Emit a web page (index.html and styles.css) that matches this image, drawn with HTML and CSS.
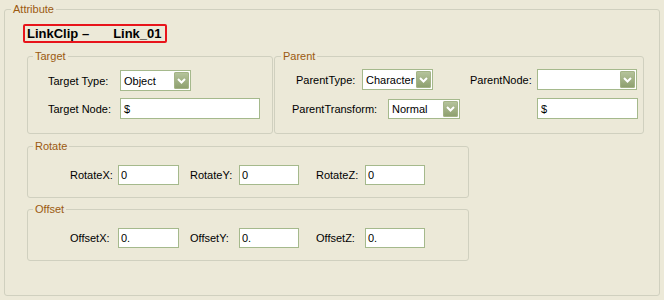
FILE: index.html
```html
<!DOCTYPE HTML>
<html>
    <head>
        <meta http-equiv="Content-Type" content="text/html; charset=UTF-8" />
        <title>Attribute</title>
        <link rel="stylesheet" href="styles.css">
    </head>
    <body>
        <fieldset class="group outer">
            <legend>Attribute</legend>
            <div class="title"><span>LinkClip –</span><span class="clip-name">Link_01</span></div>

            <div class="top-row">
                <fieldset class="group target">
                    <legend>Target</legend>
                    <div class="target-grid">
                        <label>Target Type:</label>
                        <div class="select w71"><span>Object</span><i class="drop"><svg width="9" height="6" viewBox="0 0 9 6"><path d="M1 1 L4.5 4.5 L8 1" fill="none" stroke="#fff" stroke-width="2"/></svg></i></div>
                        <label>Target Node:</label>
                        <div class="input w140">$</div>
                    </div>
                </fieldset>

                <fieldset class="group parent">
                    <legend>Parent</legend>
                    <div class="prow first">
                        <label class="lw66">ParentType:</label>
                        <div class="select w71"><span>Character</span><i class="drop"><svg width="9" height="6" viewBox="0 0 9 6"><path d="M1 1 L4.5 4.5 L8 1" fill="none" stroke="#fff" stroke-width="2"/></svg></i></div>
                        <label class="lw67 gap37">ParentNode:</label>
                        <div class="select w100"><span></span><i class="drop"><svg width="9" height="6" viewBox="0 0 9 6"><path d="M1 1 L4.5 4.5 L8 1" fill="none" stroke="#fff" stroke-width="2"/></svg></i></div>
                    </div>
                    <div class="prow second">
                        <label class="lw96">ParentTransform:</label>
                        <div class="select w72 short"><span>Normal</span><i class="drop"><svg width="9" height="6" viewBox="0 0 9 6"><path d="M1 1 L4.5 4.5 L8 1" fill="none" stroke="#fff" stroke-width="2"/></svg></i></div>
                        <div class="input w101 push">$</div>
                    </div>
                </fieldset>
            </div>

            <fieldset class="group xyz">
                <legend>Rotate</legend>
                <div class="xrow">
                    <label class="lw48">RotateX:</label><div class="input w61 small">0</div>
                    <label class="lw49 gap11">RotateY:</label><div class="input w60 small">0</div>
                    <label class="lw49 gap17">RotateZ:</label><div class="input w60 small">0</div>
                </div>
            </fieldset>

            <fieldset class="group xyz offset">
                <legend>Offset</legend>
                <div class="xrow">
                    <label class="lw48">OffsetX:</label><div class="input w61 small">0.</div>
                    <label class="lw49 gap11">OffsetY:</label><div class="input w60 small">0.</div>
                    <label class="lw49 gap17">OffsetZ:</label><div class="input w60 small">0.</div>
                </div>
            </fieldset>
        </fieldset>
    </body>
</html>
```

FILE: styles.css
```css
body {
    margin: 0;
    background: #ece9d8;
    font-family: "Liberation Sans", Arial, sans-serif;
    font-size: 11px;
    color: #000;
}

.group {
    margin: 0;
    padding: 0;
    min-width: 0;
    box-sizing: border-box;
    border: 1px solid #d0d0bf;
    border-radius: 3px;
}

.group legend {
    margin-left: 5px;
    padding: 0 2px;
    line-height: 13px;
    color: #9b5a10;
}

.outer {
    margin: 3px 0 0 4px;
    width: 656px;
    height: 293px;
}

.outer > legend,
.parent > legend {
    margin-left: 6px;
}

.title {
    margin: 8px 0 0 18px;
    width: 144px;
    height: 19px;
    box-sizing: border-box;
    border: 2px solid #e8141b;
    border-radius: 2px;
    padding-left: 2px;
    font-size: 13px;
    font-weight: bold;
    line-height: 15px;
    white-space: nowrap;
}

.clip-name {
    margin-left: 24px;
}

.top-row {
    display: flex;
    margin: 7px 0 0 22px;
    gap: 1px;
}

.target {
    width: 246px;
    height: 84px;
}

.parent {
    width: 370px;
    height: 84px;
}

.target-grid {
    display: grid;
    grid-template-columns: 72px auto;
    row-gap: 7px;
    align-items: center;
    padding: 7px 0 0 20px;
}

.prow {
    display: flex;
    align-items: center;
}

.prow.first {
    padding: 6px 0 0 21px;
}

.prow.second {
    padding: 8px 5px 0 17px;
}

.push {
    margin-left: auto;
}

.xyz {
    margin: 6px 0 0 22px;
    width: 442px;
    height: 58px;
}

.xyz.offset {
    margin-top: 5px;
}

.xrow {
    display: flex;
    align-items: center;
    padding: 12px 0 0 42px;
}

.select,
.input {
    display: flex;
    align-items: center;
    box-sizing: border-box;
    height: 21px;
    background: #fff;
    border: 1px solid #a5b98c;
    padding-left: 3px;
    white-space: nowrap;
}

.input.small {
    height: 20px;
    padding-left: 2px;
}

.select span {
    flex: 1;
}

.select.short {
    height: 20px;
}

.drop {
    display: flex;
    align-items: center;
    justify-content: center;
    width: 15px;
    height: 17px;
    margin-right: 1px;
    border-radius: 2px;
    background: linear-gradient(#b7c59e, #8c9e6c);
    box-shadow: inset 0 0 0 1px #a3b385;
}

.short .drop {
    height: 16px;
}

.w60 { width: 60px; }
.w61 { width: 61px; }
.w71 { width: 71px; }
.w72 { width: 72px; }
.w100 { width: 100px; }
.w101 { width: 101px; }
.w140 { width: 140px; }

.lw48 { width: 48px; }
.lw49 { width: 49px; }
.lw66 { width: 66px; }
.lw67 { width: 67px; }
.lw96 { width: 96px; }

.gap11 { margin-left: 11px; }
.gap17 { margin-left: 17px; }
.gap37 { margin-left: 37px; }
```
